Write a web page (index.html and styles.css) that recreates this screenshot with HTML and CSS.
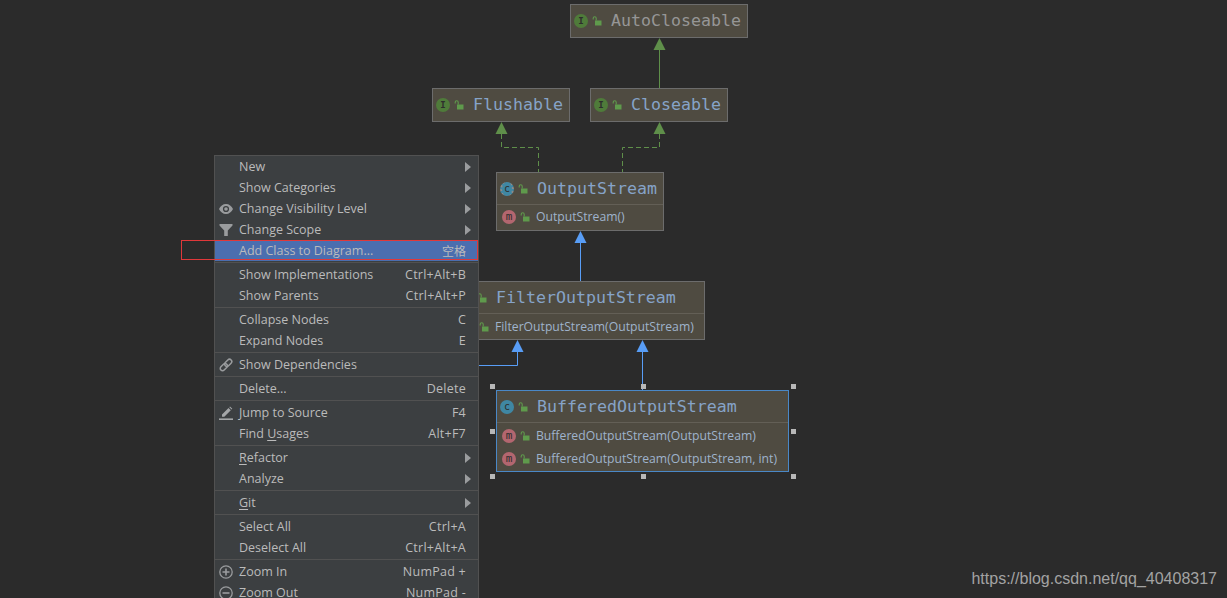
FILE: index.html
```html
<!DOCTYPE html>
<html lang="en">
<head>
<meta charset="utf-8">
<title>Diagram</title>
<link rel="stylesheet" href="styles.css">
</head>
<body>
<svg width="0" height="0" class="defs">
  <symbol id="lock" viewBox="0 0 10 10">
    <path d="M1.2 3.6V2.2a1.5 1.5 0 0 1 3 0V4.5" fill="none" stroke="#5f9a4c" stroke-width="1.1"/>
    <rect x="3" y="4.5" width="6.5" height="5" fill="#5f9a4c"/>
  </symbol>
</svg>
<main class="canvas">
  <svg class="edges" width="1227" height="598" viewBox="0 0 1227 598">
    <g fill="none" stroke="#5f8f4a">
      <path d="M659.5 50V88"/>
      <path d="M501.5 134V147.5H538.5V172" stroke-dasharray="5 3"/>
      <path d="M659.5 134V147.5H622.5V172" stroke-dasharray="5 3"/>
    </g>
    <g fill="#5f8f4a">
      <path d="M659.5 38l6 12h-12z"/>
      <path d="M501.5 122l6 12h-12z"/>
      <path d="M659.5 122l6 12h-12z"/>
    </g>
    <g fill="none" stroke="#589df6">
      <path d="M580.5 243V281"/>
      <path d="M517.5 352V365.5H470"/>
      <path d="M642.5 352V390"/>
    </g>
    <g fill="#589df6">
      <path d="M580.5 231l6 12h-12z"/>
      <path d="M517.5 340l6 12h-12z"/>
      <path d="M642.5 340l6 12h-12z"/>
    </g>
  </svg>

  <section class="node n-auto">
    <header class="head"><span class="ic ic-i">I</span><svg class="lock"><use href="#lock"/></svg><span class="title muted">AutoCloseable</span></header>
  </section>
  <section class="node n-flush">
    <header class="head"><span class="ic ic-i">I</span><svg class="lock"><use href="#lock"/></svg><span class="title">Flushable</span></header>
  </section>
  <section class="node n-close">
    <header class="head"><span class="ic ic-i">I</span><svg class="lock"><use href="#lock"/></svg><span class="title">Closeable</span></header>
  </section>
  <section class="node n-out">
    <header class="head"><span class="ic ic-a">c</span><svg class="lock"><use href="#lock"/></svg><span class="title">OutputStream</span></header>
    <div class="body"><div class="method"><span class="ic ic-m">m</span><svg class="lock"><use href="#lock"/></svg><span>OutputStream()</span></div></div>
  </section>
  <section class="node n-filter">
    <header class="head"><span class="ic ic-a"></span><svg class="lock"><use href="#lock"/></svg><span class="title">FilterOutputStream</span></header>
    <div class="body"><div class="method"><span class="ic ic-m"></span><svg class="lock"><use href="#lock"/></svg><span>FilterOutputStream(OutputStream)</span></div></div>
  </section>
  <section class="node n-buf">
    <header class="head"><span class="ic ic-c">c</span><svg class="lock"><use href="#lock"/></svg><span class="title">BufferedOutputStream</span></header>
    <div class="body">
      <div class="method"><span class="ic ic-m">m</span><svg class="lock"><use href="#lock"/></svg><span>BufferedOutputStream(OutputStream)</span></div>
      <div class="method"><span class="ic ic-m">m</span><svg class="lock"><use href="#lock"/></svg><span>BufferedOutputStream(OutputStream, int)</span></div>
    </div>
  </section>

  <i class="handle h-tl"></i><i class="handle h-tc"></i><i class="handle h-tr"></i>
  <i class="handle h-ml"></i><i class="handle h-mr"></i>
  <i class="handle h-bl"></i><i class="handle h-bc"></i><i class="handle h-br"></i>

  <nav class="menu">
    <div class="item"><span class="gutter"></span><span>New</span><b class="arrow"></b></div>
    <div class="item"><span class="gutter"></span><span>Show Categories</span><b class="arrow"></b></div>
    <div class="item"><span class="gutter"><svg width="14" height="14" viewBox="0 0 14 14"><path fill-rule="evenodd" d="M7 2C3.900 2 1.300 4.100 0 7c1.300 2.900 3.900 5 7 5s5.700-2.100 7-5C12.700 4.100 10.100 2 7 2zM7 3.900a3.100 3.100 0 1 1 0 6.200 3.100 3.100 0 0 1 0-6.200z" fill="#9a9c9e"/><circle cx="7" cy="7" r="1.800" fill="#9a9c9e"/></svg></span><span>Change Visibility Level</span><b class="arrow"></b></div>
    <div class="item"><span class="gutter"><svg width="14" height="14" viewBox="0 0 14 14"><path d="M.5 1h13v1.500L8.800 7.500V13H5.200V7.500L.5 2.500z" fill="#9a9c9e"/></svg></span><span>Change Scope</span><b class="arrow"></b></div>
    <div class="item active"><span class="gutter"></span><span>Add Class to Diagram...</span><span class="key cjk">空格</span></div>
    <hr class="sep">
    <div class="item"><span class="gutter"></span><span>Show Implementations</span><span class="key">Ctrl+Alt+B</span></div>
    <div class="item"><span class="gutter"></span><span>Show Parents</span><span class="key">Ctrl+Alt+P</span></div>
    <hr class="sep">
    <div class="item"><span class="gutter"></span><span>Collapse Nodes</span><span class="key">C</span></div>
    <div class="item"><span class="gutter"></span><span>Expand Nodes</span><span class="key">E</span></div>
    <hr class="sep">
    <div class="item"><span class="gutter"><svg width="14" height="14" viewBox="0 0 14 14"><g fill="none" stroke="#9a9c9e" stroke-width="1.500" transform="rotate(-45 7 7)"><rect x="-.2" y="4.700" width="8.200" height="4.600" rx="2.300"/><rect x="6" y="4.700" width="8.200" height="4.600" rx="2.300"/></g></svg></span><span>Show Dependencies</span></div>
    <hr class="sep">
    <div class="item"><span class="gutter"></span><span>Delete...</span><span class="key">Delete</span></div>
    <hr class="sep">
    <div class="item"><span class="gutter"><svg width="14" height="14" viewBox="0 0 14 14"><path d="M3 8.500L9.500 2l2.300 2.300-6.500 6.500H3zM10.300 1.200l.7-.7 2.300 2.300-.7.7z" fill="#a4a6a8"/><rect y="12.400" width="14" height="1.600" fill="#a4a6a8"/></svg></span><span>Jump to Source</span><span class="key">F4</span></div>
    <div class="item"><span class="gutter"></span><span>Find <u>U</u>sages</span><span class="key">Alt+F7</span></div>
    <hr class="sep">
    <div class="item"><span class="gutter"></span><span><u>R</u>efactor</span><b class="arrow"></b></div>
    <div class="item"><span class="gutter"></span><span>Analyze</span><b class="arrow"></b></div>
    <hr class="sep">
    <div class="item"><span class="gutter"></span><span><u>G</u>it</span><b class="arrow"></b></div>
    <hr class="sep">
    <div class="item"><span class="gutter"></span><span>Select All</span><span class="key">Ctrl+A</span></div>
    <div class="item"><span class="gutter"></span><span>Deselect All</span><span class="key">Ctrl+Alt+A</span></div>
    <hr class="sep">
    <div class="item"><span class="gutter"><svg width="14" height="14" viewBox="0 0 14 14"><circle cx="7" cy="7" r="6.200" fill="none" stroke="#9a9c9e" stroke-width="1.300"/><path d="M3.500 7h7M7 3.500v7" stroke="#9a9c9e" stroke-width="1.600"/></svg></span><span>Zoom In</span><span class="key">NumPad +</span></div>
    <div class="item"><span class="gutter"><svg width="14" height="14" viewBox="0 0 14 14"><circle cx="7" cy="7" r="6.200" fill="none" stroke="#9a9c9e" stroke-width="1.300"/><path d="M3.500 7h7" stroke="#9a9c9e" stroke-width="1.600"/></svg></span><span>Zoom Out</span><span class="key">NumPad -</span></div>
  </nav>
  <div class="mark"></div>
  <div class="watermark">https://blog.csdn.net/qq_40408317</div>
</main>
</body>
</html>
```

FILE: styles.css
```css
* { box-sizing: border-box; }
html, body { margin: 0; height: 100%; background: #2b2b2b; overflow: hidden; }
.defs { position: absolute; }
.canvas { position: relative; width: 1227px; height: 598px; overflow: hidden; background: #2b2b2b; font-family: "Open Sans", "Noto Sans", sans-serif; }
.edges { position: absolute; left: 0; top: 0; }

.node { position: absolute; background: #4f4b41; border: 1px solid #6c6c6c; color: #a3b5cc; }
.n-auto { left: 570px; top: 4px; width: 178px; height: 34px; }
.n-flush { left: 432px; top: 88px; width: 138px; height: 34px; }
.n-close { left: 590px; top: 88px; width: 138px; height: 34px; }
.n-out { left: 496px; top: 172px; width: 168px; height: 59px; }
.n-filter { left: 455px; top: 281px; width: 250px; height: 59px; }
.n-buf { left: 496px; top: 390px; width: 293px; height: 82px; border-color: #4a88c7; }

.head { display: flex; align-items: center; height: 32px; padding-left: 3px; border-bottom: 1px solid #635f56; }
.n-auto .head, .n-flush .head, .n-close .head { border-bottom: 0; }
.title { margin-left: 9px; font: 16.6px/1 "DejaVu Sans Mono", monospace; color: #86a3c8; }
.n-out .title, .n-filter .title, .n-buf .title { margin-top: 2px; }
.title.muted { color: #969696; }
.body { padding-top: 1px; }
.method { display: flex; align-items: center; height: 23px; padding-left: 5px; font-size: 12.2px; color: #9fb3cc; }
.method span:last-child { margin-left: 6px; white-space: nowrap; }
.n-out .body { padding-top: 0; }

.ic { flex: none; display: flex; align-items: center; justify-content: center; width: 14px; height: 14px; border-radius: 50%; font: 10px/1 "DejaVu Sans Mono", monospace; color: #2d2d2d; }
.ic-i { background: #4f7b3a; font-weight: bold; font-size: 9px; }
.ic-c { background: #3f87a3; }
.ic-a { background: #3f87a3; border-left: 2px dotted #8c8c8c; border-right: 2px dotted #8c8c8c; }
.ic-m { background: #b3666f; font-size: 11px; }
.lock { flex: none; width: 10px; height: 10px; margin-left: 4px; }

.handle { position: absolute; width: 5px; height: 5px; background: #b8b8b8; }
.h-tl { left: 490px; top: 384px; } .h-tc { left: 641px; top: 384px; } .h-tr { left: 791px; top: 384px; }
.h-ml { left: 490px; top: 429px; } .h-mr { left: 791px; top: 429px; }
.h-bl { left: 490px; top: 474px; } .h-bc { left: 641px; top: 474px; } .h-br { left: 791px; top: 474px; }

.menu { position: absolute; left: 214px; top: 155px; width: 265px; background: #3c3f41; border: 1px solid #515151; color: #bbbbbb; font-size: 12.5px; }
.item { position: relative; display: flex; align-items: center; height: 21px; padding-right: 12px; white-space: nowrap; }
.item.active { background: #4b6eaf; }
.gutter { flex: none; display: flex; align-items: center; justify-content: center; width: 24px; padding-right: 2px; }
.key { margin-left: auto; letter-spacing: 0.25px; }
.cjk { font-family: "Noto Sans CJK SC", sans-serif; font-size: 12px; letter-spacing: 0; }
.arrow { margin-left: auto; margin-right: -5px; width: 0; height: 0; border-left: 6px solid #9a9c9e; border-top: 5px solid transparent; border-bottom: 5px solid transparent; }
.sep { height: 3px; margin: 0; border: 0; padding: 0; background: linear-gradient(#3c3f41 1px, #515151 1px, #515151 2px, #3c3f41 2px); }
u { text-underline-offset: 2px; }

.mark { position: absolute; left: 181px; top: 240px; width: 297px; height: 20px; border: 1px solid #e0383a; }
.watermark { position: absolute; right: 10px; top: 568px; font: 16px/22px "Liberation Sans", Arial, sans-serif; color: #a3a3a3; }
```
